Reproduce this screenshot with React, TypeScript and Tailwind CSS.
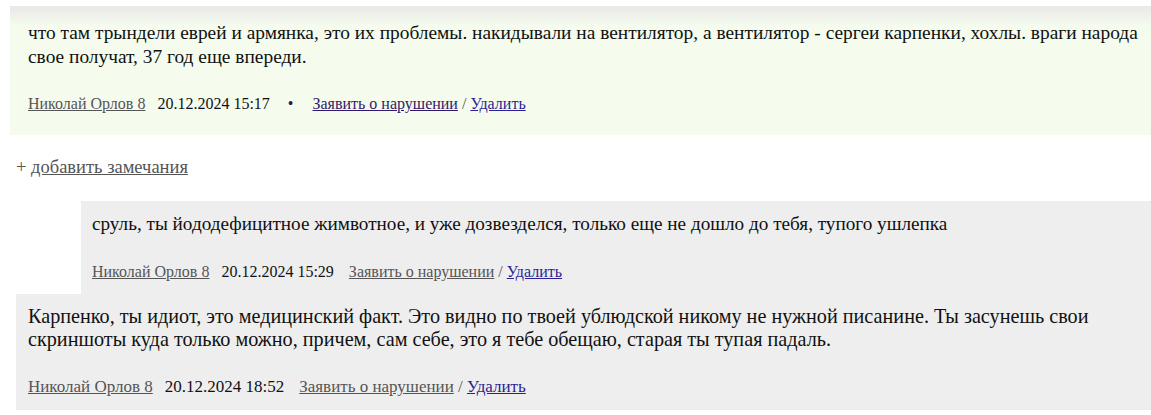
const serif = "font-['Liberation_Serif','Times_New_Roman',serif]";

type MetaProps = {
  date: string;
  bullet?: boolean;
  reportColor: string;
  size?: string;
};

function Meta({ date, bullet, reportColor, size = "text-[16px]" }: MetaProps) {
  return (
    <div className={`${size} leading-[20px] text-[#111] whitespace-nowrap`}>
      <a href="#" className="text-[#555] underline mr-[12px]">
        Николай Орлов 8
      </a>
      <span>{date}</span>
      {bullet ? (
        <span className="text-[#1e1a5e] ml-[18px] mr-[19px]">•</span>
      ) : (
        <span className="inline-block w-[15px]" />
      )}
      <a href="#" className={`underline ${reportColor}`}>
        Заявить о нарушении
      </a>
      <span className="text-[#555]"> / </span>
      <a href="#" className="underline text-[#2b1f96]">
        Удалить
      </a>
    </div>
  );
}

export default function App() {
  return (
    <div className={`${serif} bg-white w-[1151px] h-[415px] overflow-hidden pt-[6px]`}>
      {/* первый комментарий */}
      <div className="relative ml-[10px] bg-[#f5fcee] pl-[18px] pr-[12px] pt-[15px] pb-[21px]">
        <div className="absolute left-0 right-0 top-0 h-[20px] bg-gradient-to-b from-[#e8e8e8] to-transparent" />
        <p className="relative text-[19.4px] leading-[24px] text-[#111]">
          что там трындели еврей и армянка, это их проблемы. накидывали на вентилятор, а вентилятор - сергеи карпенки, хохлы. враги народа свое получат, 37 год еще впереди.
        </p>
        <div className="relative mt-[25px]">
          <Meta date="20.12.2024 15:17" bullet reportColor="text-[#33196b]" />
        </div>
      </div>

      <div className="mt-[20px] ml-[16px] text-[18.5px] leading-[24px] text-[#555]">
        + <a href="#" className="underline">добавить замечания</a>
      </div>

      {/* ответ */}
      <div className="mt-[22px] ml-[81px] bg-[#eeeeee] pl-[11px] pr-[12px] pt-[11px] pb-[12px]">
        <p className="text-[19.2px] leading-[24px] text-[#111]">
          сруль, ты йододефицитное жимвотное, и уже дозвезделся, только еще не дошло до тебя, тупого ушлепка
        </p>
        <div className="mt-[26px]">
          <Meta date="20.12.2024 15:29" reportColor="text-[#555]" />
        </div>
      </div>

      <div className="ml-[16px] bg-[#eeeeee] pl-[12px] pr-[8px] pt-[11px] pb-[13px]">
        <p className="text-[20.2px] leading-[23px] text-[#111]">
          Карпенко, ты идиот, это медицинский факт. Это видно по твоей ублюдской никому не нужной писанине. Ты засунешь свои скриншоты куда только можно, причем, сам себе, это я тебе обещаю, старая ты тупая падаль.
        </p>
        <div className="mt-[26px]">
          <Meta date="20.12.2024 18:52" reportColor="text-[#555]" size="text-[17px]" />
        </div>
      </div>
    </div>
  );
}
